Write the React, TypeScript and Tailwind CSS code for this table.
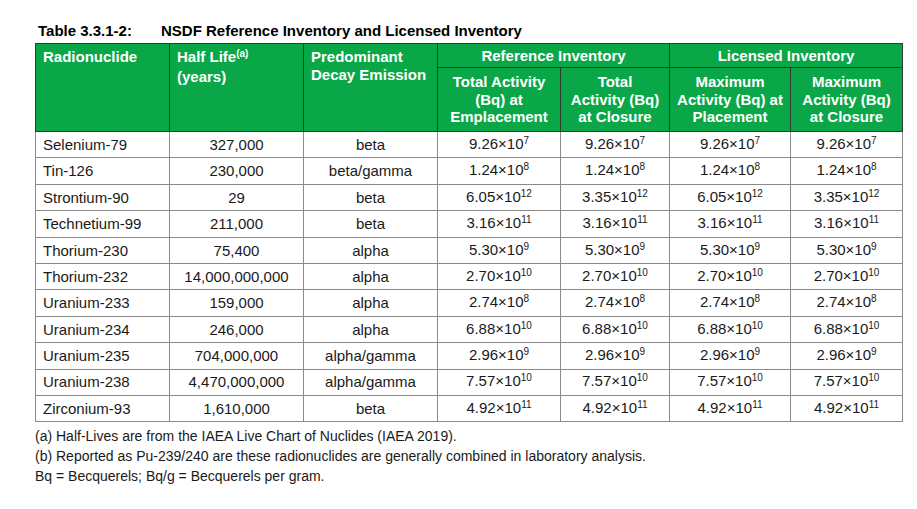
import React from 'react';

interface Row {
  name: string;
  halfLife: string;
  decay: string;
  values: [string, string][];
}

const rows: Row[] = [
  { name: 'Selenium-79', halfLife: '327,000', decay: 'beta', values: [['9.26', '7'], ['9.26', '7'], ['9.26', '7'], ['9.26', '7']] },
  { name: 'Tin-126', halfLife: '230,000', decay: 'beta/gamma', values: [['1.24', '8'], ['1.24', '8'], ['1.24', '8'], ['1.24', '8']] },
  { name: 'Strontium-90', halfLife: '29', decay: 'beta', values: [['6.05', '12'], ['3.35', '12'], ['6.05', '12'], ['3.35', '12']] },
  { name: 'Technetium-99', halfLife: '211,000', decay: 'beta', values: [['3.16', '11'], ['3.16', '11'], ['3.16', '11'], ['3.16', '11']] },
  { name: 'Thorium-230', halfLife: '75,400', decay: 'alpha', values: [['5.30', '9'], ['5.30', '9'], ['5.30', '9'], ['5.30', '9']] },
  { name: 'Thorium-232', halfLife: '14,000,000,000', decay: 'alpha', values: [['2.70', '10'], ['2.70', '10'], ['2.70', '10'], ['2.70', '10']] },
  { name: 'Uranium-233', halfLife: '159,000', decay: 'alpha', values: [['2.74', '8'], ['2.74', '8'], ['2.74', '8'], ['2.74', '8']] },
  { name: 'Uranium-234', halfLife: '246,000', decay: 'alpha', values: [['6.88', '10'], ['6.88', '10'], ['6.88', '10'], ['6.88', '10']] },
  { name: 'Uranium-235', halfLife: '704,000,000', decay: 'alpha/gamma', values: [['2.96', '9'], ['2.96', '9'], ['2.96', '9'], ['2.96', '9']] },
  { name: 'Uranium-238', halfLife: '4,470,000,000', decay: 'alpha/gamma', values: [['7.57', '10'], ['7.57', '10'], ['7.57', '10'], ['7.57', '10']] },
  { name: 'Zirconium-93', halfLife: '1,610,000', decay: 'beta', values: [['4.92', '11'], ['4.92', '11'], ['4.92', '11'], ['4.92', '11']] },
];

const Sup: React.FC<{ children: React.ReactNode }> = ({ children }) => (
  <span className="relative -top-[5px] text-[10px]">{children}</span>
);

const th = 'border border-[#2d3b30] bg-[#0aa748] font-bold text-white';
const td = 'h-[26.4px] border border-[#8a8a8a] p-0 text-[#1a1a1a]';

const App: React.FC = () => {
  return (
    <div className="min-h-[509px] bg-white pl-[35px] pt-[19px] font-['Liberation_Sans',Arial,sans-serif] text-[15px]">
      {/* 제목 */}
      <div className="flex h-[24px] items-center font-bold text-black">
        <span className="w-[126px] pl-[3px]">Table 3.3.1-2:</span>
        <span>NSDF Reference Inventory and Licensed Inventory</span>
      </div>

      <table className="w-[867px] table-fixed border-collapse leading-[17.5px]">
        <colgroup>
          <col className="w-[134px]" />
          <col className="w-[134px]" />
          <col className="w-[134px]" />
          <col className="w-[123px]" />
          <col className="w-[109px]" />
          <col className="w-[121px]" />
          <col className="w-[112px]" />
        </colgroup>
        <thead>
          <tr className="h-[24px]">
            <th rowSpan={2} className={`${th} px-[7px] pt-[4px] text-left align-top`}>
              Radionuclide
            </th>
            <th rowSpan={2} className={`${th} px-[7px] pt-[4px] text-left align-top`}>
              Half Life<Sup>(a)</Sup>
              <br />
              (years)
            </th>
            <th rowSpan={2} className={`${th} px-[7px] pt-[4px] text-left align-top`}>
              Predominant Decay Emission
            </th>
            <th colSpan={2} className={`${th} text-center`}>
              Reference Inventory
            </th>
            <th colSpan={2} className={`${th} text-center`}>
              Licensed Inventory
            </th>
          </tr>
          <tr className="h-[64px]">
            <th className={`${th} px-0 text-center`}>
              Total Activity
              <br />
              (Bq) at
              <br />
              Emplacement
            </th>
            <th className={`${th} px-0 text-center`}>
              Total
              <br />
              Activity (Bq)
              <br />
              at Closure
            </th>
            <th className={`${th} px-0 text-center`}>
              Maximum
              <br />
              Activity (Bq) at
              <br />
              Placement
            </th>
            <th className={`${th} px-0 text-center`}>
              Maximum
              <br />
              Activity (Bq)
              <br />
              at Closure
            </th>
          </tr>
        </thead>
        <tbody>
          {rows.map((row) => (
            <tr key={row.name}>
              <td className={`${td} pl-[7px] text-left`}>{row.name}</td>
              <td className={`${td} text-center`}>{row.halfLife}</td>
              <td className={`${td} text-center`}>{row.decay}</td>
              {row.values.map(([base, exp], i) => (
                <td key={i} className={`${td} text-center`}>
                  {base}×10<Sup>{exp}</Sup>
                </td>
              ))}
            </tr>
          ))}
        </tbody>
      </table>

      {/* 각주 */}
      <div className="pt-[4px] text-[14px] leading-[20px] text-[#1a1a1a]">
        <p>(a) Half-Lives are from the IAEA Live Chart of Nuclides (IAEA 2019).</p>
        <p>(b) Reported as Pu-239/240 are these radionuclides are generally combined in laboratory analysis.</p>
        <p>Bq = Becquerels; Bq/g = Becquerels per gram.</p>
      </div>
    </div>
  );
};

export default App;
